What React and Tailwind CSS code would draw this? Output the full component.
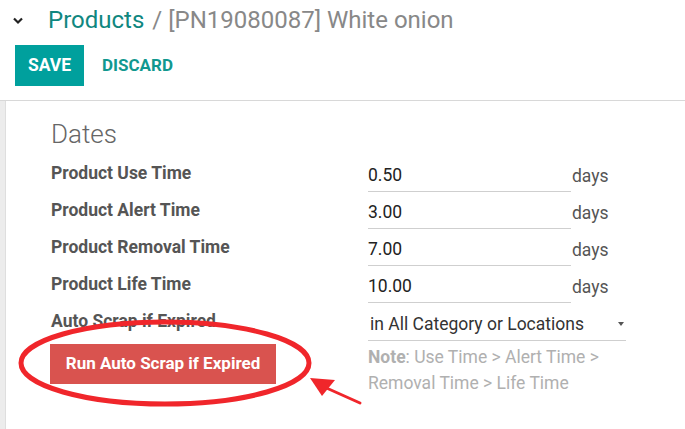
import React from 'react';

const rows = [
  { label: 'Product Use Time', value: '0.50' },
  { label: 'Product Alert Time', value: '3.00' },
  { label: 'Product Removal Time', value: '7.00' },
  { label: 'Product Life Time', value: '10.00' },
];

const Annotation = () => (
  <svg className="absolute left-0 top-0 pointer-events-none" width="685" height="429">
    <ellipse cx="165" cy="363" rx="144" ry="41" fill="none" stroke="#f0262b" strokeWidth="5" />
    <line x1="360" y1="403" x2="322" y2="386" stroke="#f0262b" strokeWidth="3" strokeLinecap="round" />
    <polygon points="310,378 335,380 322,396" fill="#f0262b" />
  </svg>
);

const App = () => {
  return (
    <div className="relative w-[685px] h-[429px] overflow-hidden bg-white font-['Roboto',sans-serif]">
      <div className="flex items-center h-[40px] pl-[12px]">
        <svg width="12" height="9" viewBox="0 0 12 9" className="mr-[24px] mt-[1px]">
          <path d="M2 2.5 L6 6.5 L10 2.5" fill="none" stroke="#222" strokeWidth="2.2" />
        </svg>
        <span className="text-[24px] text-[#10877f]">Products</span>
        <span className="text-[24px] text-[#888] ml-[8px]">/ [PN19080087] White onion</span>
      </div>
      <div className="flex items-center pl-[15px] pt-[5px]">
        <button className="w-[69px] h-[41px] bg-[#00a09d] text-white font-bold text-[17.5px]">SAVE</button>
        <button className="ml-[18px] text-[#11988f] font-bold text-[17px]">DISCARD</button>
      </div>
      <div className="mt-[14px] flex border-t border-[#d8d8d8] h-[400px]">
        <div className="w-[6px] bg-[#ececec] border-r border-[#dedede]" />
        <div className="pl-[45px] pt-[17px]">
          <div className="text-[26px] font-light text-[#666] leading-[32px]">Dates</div>
          <div className="mt-[10px] flex flex-col">
            {rows.map((r) => (
              <div key={r.label} className="flex h-[37px]">
                <div className="w-[317px] text-[17.5px] font-bold text-[#555]">{r.label}</div>
                <div className="w-[203px] h-[32px] border-b border-[#cfcfcf] text-[17.5px] text-[#222] pt-[2px]">{r.value}</div>
                <div className="text-[17.5px] text-[#555] pt-[3px] pl-[1px]">days</div>
              </div>
            ))}
            <div className="flex h-[37px]">
              <div className="w-[317px] text-[17.5px] font-bold text-[#555]">Auto Scrap if Expired</div>
              <div className="w-[258px] h-[33px] border-b border-[#cfcfcf] text-[17.5px] text-[#333] pt-[3px] pl-[2px] flex justify-between">
                <span>in All Category or Locations</span>
                <span className="mr-[2px] mt-[11px] w-0 h-0 border-l-[3px] border-r-[3px] border-t-[4px] border-l-transparent border-r-transparent border-t-[#555]" />
              </div>
            </div>
          </div>
          <div className="flex -mt-[1px]">
            <div className="w-[317px]">
              <button className="w-[226px] h-[40px] -ml-[1px] bg-[#d9534f] text-white font-bold text-[17px]">Run Auto Scrap if Expired</button>
            </div>
            <div className="text-[17.5px] leading-[26px] text-[#b0b0b0]">
              <div><span className="font-bold">Note</span>: Use Time &gt; Alert Time &gt;</div>
              <div>Removal Time &gt; Life Time</div>
            </div>
          </div>
        </div>
      </div>
      <Annotation />
    </div>
  );
};

export default App;
